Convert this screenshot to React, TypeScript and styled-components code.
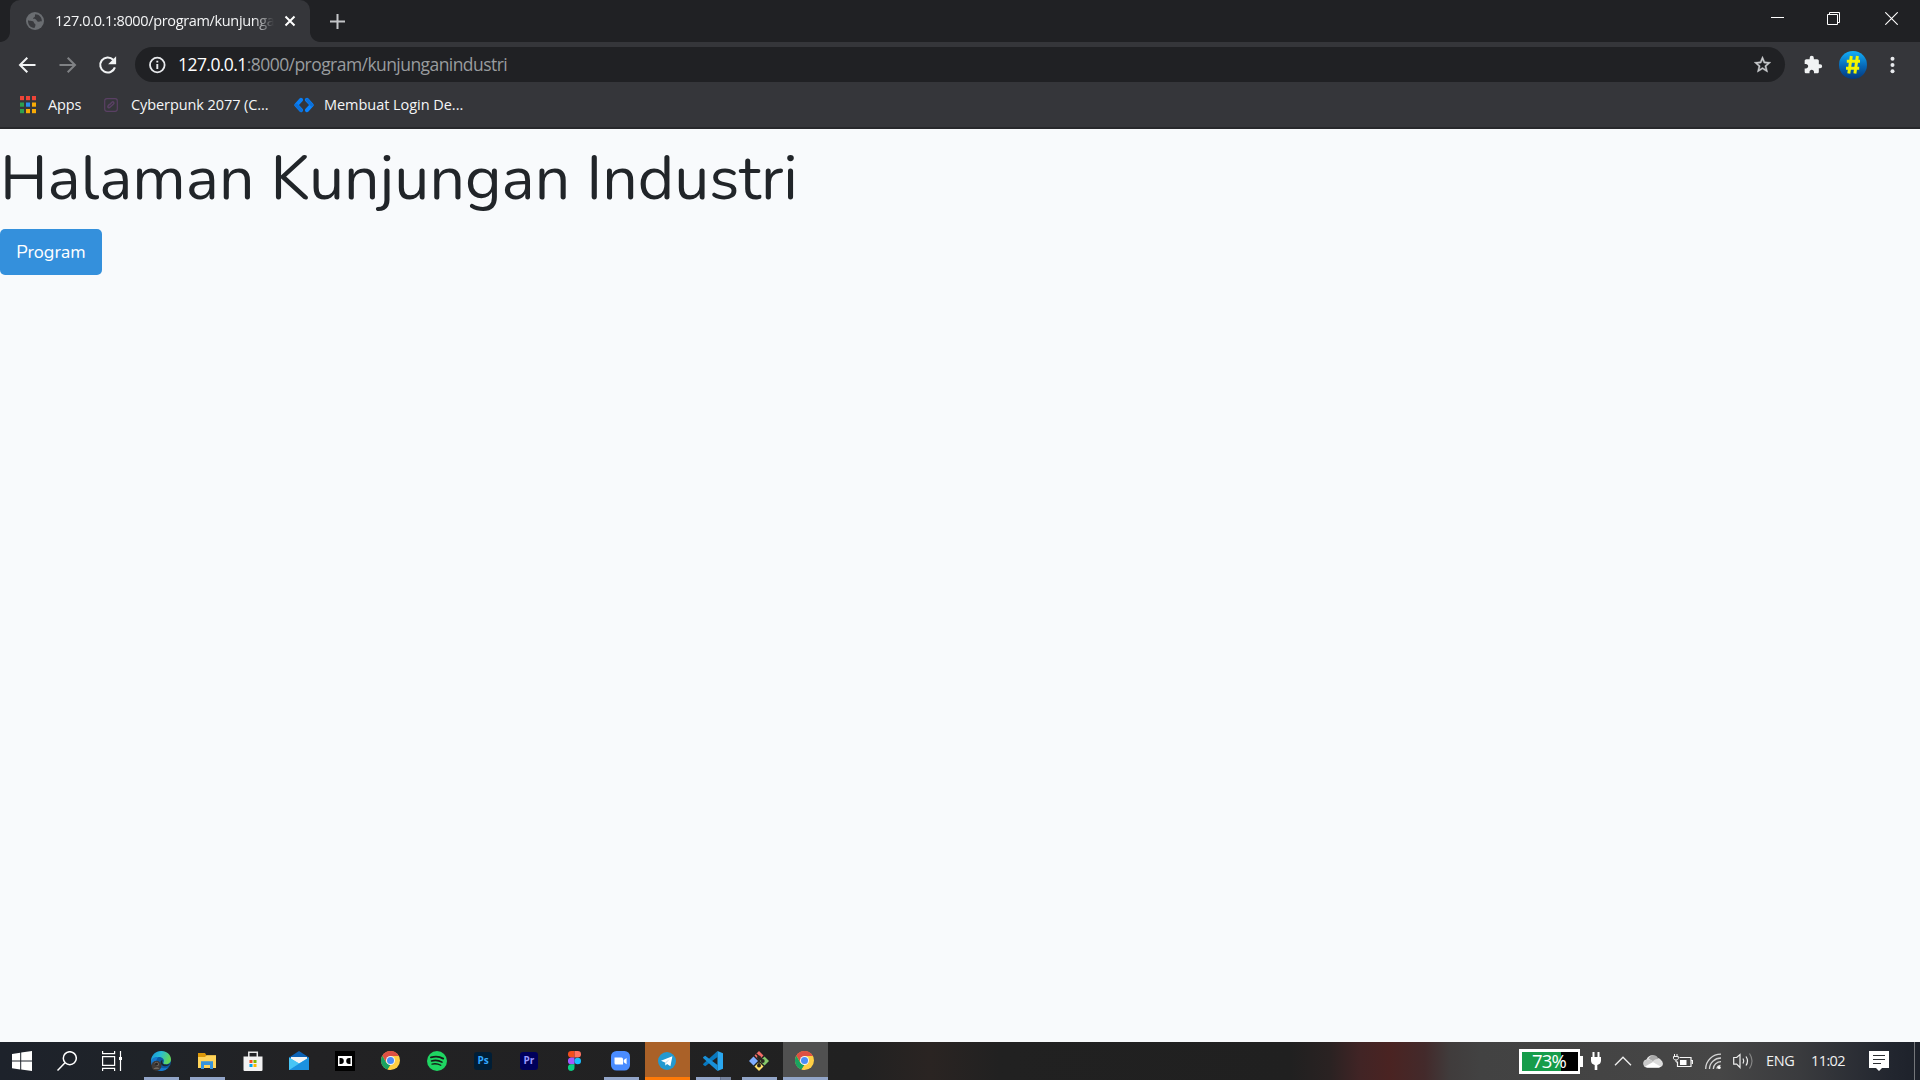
import React from "react";
import styled, { createGlobalStyle } from "styled-components";

const GlobalStyle = createGlobalStyle`
  * { box-sizing: border-box; }
  html, body { margin: 0; padding: 0; overflow: hidden; }
  body { font-family: "Open Sans", "Noto Sans", sans-serif; }
  svg { display: block; flex: none; }
`;

const Screen = styled.div`
  width: 1920px;
  height: 1080px;
  display: flex;
  flex-direction: column;
  background: #f8fafc;
  overflow: hidden;
`;

const Browser = styled.header`
  flex: none;
  height: 129px;
  display: flex;
  flex-direction: column;
  background: #35363a;
  border-bottom: 2px solid #27282b;
`;

const TabStrip = styled.div`
  height: 42px;
  display: flex;
  align-items: stretch;
  background: #202124;
`;

const Flare = styled.div<{ $side: "left" | "right" }>`
  width: 10px;
  background: radial-gradient(
    circle at ${(p) => (p.$side === "left" ? "0 32px" : "10px 32px")},
    #202124 9.5px,
    #35363a 10.3px
  );
  clip-path: inset(32px 0 0 0);
`;

const Tab = styled.div`
  width: 300px;
  display: flex;
  align-items: center;
  padding: 0 14px 0 16px;
  border-radius: 10px 10px 0 0;
  background: #35363a;
`;

const TabTitle = styled.div`
  width: 221px;
  margin: 0 9px 0 11px;
  padding-bottom: 1px;
  white-space: nowrap;
  color: #f4f5f6;
  font-size: 14.5px;
  line-height: 20px;
  letter-spacing: -0.35px;
  mask-image: linear-gradient(to right, #000 198px, transparent 219px);
`;

const NewTab = styled.div`
  display: flex;
  align-items: center;
  margin-left: 10px;
`;

const WindowButtons = styled.div`
  display: flex;
  margin-left: auto;
  height: 37px;
  align-items: center;
  gap: 43px;
  padding-right: 22px;
`;

const Toolbar = styled.div`
  height: 45px;
  display: flex;
  align-items: center;
  padding: 0 16px 0 18px;
`;

const NavButtons = styled.div`
  display: flex;
  gap: 20px;
  width: 117px;
`;

const AddressBar = styled.div`
  width: 1650px;
  height: 35px;
  display: flex;
  align-items: center;
  padding: 0 12px 0 12px;
  border-radius: 18px;
  background: #202124;
`;

const Url = styled.div`
  flex: 1;
  margin-left: 11px;
  padding-bottom: 1px;
  color: #999c9f;
  font-size: 17.5px;
  line-height: 24px;
  letter-spacing: -0.56px;
`;

const Host = styled.span`
  color: #fff;
`;

const Extensions = styled.div`
  display: flex;
  align-items: center;
  margin-left: 18px;
`;

const Profile = styled.div`
  margin: 0 15px 0 16px;
`;

const Bookmarks = styled.nav`
  height: 37px;
  display: flex;
  align-items: center;
  padding: 0 0 2px 18px;
`;

const Bookmark = styled.a<{ $width: number; $gap: number; $spacing: number }>`
  width: ${(p) => p.$width}px;
  display: flex;
  align-items: center;
  gap: ${(p) => p.$gap}px;
  color: #f4f5f6;
  font-size: 14.5px;
  line-height: 20px;
  letter-spacing: ${(p) => p.$spacing}px;
  white-space: nowrap;
`;

const Page = styled.main`
  flex: 1;
  color: #212529;
`;

const Heading = styled.h1`
  margin: 11px 0 12px;
  font-family: Nunito, Lato, sans-serif;
  font-size: 62.5px;
  font-weight: 400;
  line-height: 77px;
  white-space: nowrap;
`;

const ProgramButton = styled.button`
  display: block;
  width: 102px;
  height: 46px;
  border: 0;
  border-radius: 5px;
  padding: 0;
  background: #3490dc;
  color: #fff;
  font-family: Nunito, Lato, sans-serif;
  font-size: 18px;
`;

const Taskbar = styled.footer`
  flex: none;
  height: 38px;
  display: flex;
  background: linear-gradient(
    to right,
    #1d222b 0, #1f2328 150px, #222224 300px, #212121 860px,
    #2a2422 930px, #212121 1000px, #202020 1290px, #2a2222 1330px, #412425 1360px,
    #4a2322 1390px, #432a2b 1425px, #403c3c 1450px, #424242 1480px,
    #464646 1720px, #3a3b3e 1800px, #22262f 1890px, #1d212a 1920px
  );
`;

const SystemButtons = styled.div`
  display: flex;
  width: 139px;
`;

const Pinned = styled.div`
  display: flex;
  gap: 1px;
`;

const TaskCell = styled.div<{ $bg?: string; $line?: string }>`
  width: 45px;
  height: 38px;
  display: flex;
  align-items: center;
  justify-content: center;
  padding-right: 1px;
  background-color: ${(p) => p.$bg ?? "transparent"};
  background-image: ${(p) => (p.$line ? `linear-gradient(to right, ${p.$line})` : "none")};
  background-size: ${(p) => (p.$bg ? "45px 3px" : "35px 3px")};
  background-position: center bottom;
  background-repeat: no-repeat;
`;

const Adobe = styled.div<{ $bg: string; $fg: string }>`
  width: 18px;
  height: 18px;
  border-radius: 3px;
  background: ${(p) => p.$bg};
  color: ${(p) => p.$fg};
  font-size: 10px;
  font-weight: 700;
  line-height: 16px;
  text-align: center;
`;

const Tray = styled.div`
  display: flex;
  align-items: center;
  margin-left: auto;
`;

const Battery = styled.div`
  width: 61px;
  height: 25px;
  border: 3px solid #fff;
  border-right-width: 2px;
  padding-right: 2px;
  background: linear-gradient(to right, #169c4a 39px, #000 39px);
  color: #fff;
  font-size: 18.5px;
  line-height: 17px;
  letter-spacing: -0.8px;
  text-align: center;
`;

const BatteryTip = styled.div`
  width: 3px;
  height: 11px;
  background: #fff;
`;

const TrayCell = styled.div<{ $width: number }>`
  width: ${(p) => p.$width}px;
  display: flex;
  justify-content: center;
`;

const TrayText = styled.div<{ $width: number; $spacing: number }>`
  width: ${(p) => p.$width}px;
  color: #f0f0f0;
  font-size: 14.5px;
  line-height: 20px;
  letter-spacing: ${(p) => p.$spacing}px;
  white-space: nowrap;
`;

const DesktopPeek = styled.div`
  width: 6px;
  height: 38px;
  border-left: 1px solid #74767a;
`;

const Globe = () => (
  <svg width="18" height="18" viewBox="0 0 18 18">
    <circle cx="9" cy="9" r="9" fill="#6a6d71" />
    <path d="M2 8.2C3.6 9 5.4 8.6 7 9.3c1.2.6.5 2.1 1.9 2.5 1 .4.6 2.7-.5 4.1C4.6 15.800 1.700 12.700 2 8.200ZM9.300 2.200c-.8 1.100.2 1.800-.7 2.700-.9.8-1.900.9-1.600 1.700.5.900 1.700.1 3 .9 1 .7.8 2.200 2.300 2.300 1.400.1 1.900-.9 3.500-.4C16.300 5.600 13.200 2.200 9.300 2.200Z" fill="#393a3e" />
  </svg>
);

const CloseTab = () => (
  <svg width="12" height="12" viewBox="0 0 12 12">
    <path d="M1.500 1.500l9 9M10.500 1.500l-9 9" stroke="#fff" strokeWidth="2" />
  </svg>
);

const Plus = () => (
  <svg width="15" height="15" viewBox="0 0 15 15">
    <path d="M7.500 0v15M0 7.500h15" stroke="#c3c5c8" strokeWidth="2" />
  </svg>
);

const Minimise = () => (
  <svg width="13" height="13" viewBox="0 0 13 13"><path d="M0 5.500h13" stroke="#fff" /></svg>
);
const Restore = () => (
  <svg width="15" height="13" viewBox="0 0 15 13" fill="none" stroke="#fff">
    <path d="M.5 2.500h10v10H.5zM2.500 2.500v-2h10v10h-2" />
  </svg>
);
const CloseWindow = () => (
  <svg width="13" height="13" viewBox="0 0 13 13"><path d="M.3.300l12.400 12.400M12.700.300L.3 12.700" stroke="#fff" strokeWidth="1.100" /></svg>
);

const Arrow = ({ forward }: { forward?: boolean }) => (
  <svg width="20" height="20" viewBox="0 0 20 20" fill="none" stroke={forward ? "#808285" : "#f1f3f4"} strokeWidth="2">
    <path d={forward ? "M1.500 10h15M9.700 2.700L17 10l-7.300 7.300" : "M17.500 10H2.500M9.300 2.700L2 10l7.300 7.300"} />
  </svg>
);

const Reload = () => (
  <svg width="20" height="20" viewBox="0 0 20 20">
    <path d="M15.200 4.800A7.500 7.500 0 1 0 16.900 12.300" fill="none" stroke="#f1f3f4" strokeWidth="2.100" />
    <path d="M18.100 1.200v8h-8z" fill="#f1f3f4" />
  </svg>
);

const Info = () => (
  <svg width="20" height="20" viewBox="0 0 20 20">
    <circle cx="10.300" cy="10" r="7.300" fill="none" stroke="#e8eaed" strokeWidth="1.800" />
    <path d="M10.300 9v5M10.300 5.700v1.900" stroke="#e8eaed" strokeWidth="1.900" />
  </svg>
);

const Star = () => (
  <svg width="20" height="20" viewBox="0 0 24 24">
    <path transform="translate(-.6 -.4)" d="M22 9.240l-7.190-.62L12 2 9.190 8.630 2 9.240l5.460 4.730L5.820 21 12 17.270 18.180 21l-1.630-7.030L22 9.240zM12 15.400l-3.760 2.270 1-4.280-3.320-2.880 4.380-.38L12 6.100l1.710 4.040 4.380.38-3.320 2.880 1 4.280L12 15.400z" fill="#c8cacd" stroke="#c8cacd" strokeWidth=".5" />
  </svg>
);

const Puzzle = () => (
  <svg width="20" height="20" viewBox="0 0 24 24">
    <path d="M20.500 11H19V7c0-1.100-.9-2-2-2h-4V3.500a2.500 2.500 0 0 0-5 0V5H4c-1.100 0-1.990.9-1.990 2v3.800H3.500c1.490 0 2.700 1.210 2.700 2.700s-1.210 2.700-2.700 2.700H2V20c0 1.100.9 2 2 2h3.800v-1.500c0-1.490 1.210-2.700 2.700-2.700 1.490 0 2.700 1.210 2.700 2.700V22H17c1.100 0 2-.9 2-2v-4h1.500a2.500 2.500 0 0 0 0-5z" fill="#f1f3f4" />
  </svg>
);

const Avatar = () => (
  <svg width="28" height="28" viewBox="0 0 28 28">
    <defs>
      <linearGradient id="avatar" x1="0" y1="0" x2="0" y2="1">
        <stop offset="0" stopColor="#12b0fb" />
        <stop offset=".55" stopColor="#0766b4" />
        <stop offset="1" stopColor="#04397f" />
      </linearGradient>
    </defs>
    <circle cx="14" cy="14" r="14" fill="url(#avatar)" />
    <path d="M12.300 5L9.800 22.500M18.400 5l-2.500 17.500M7.800 10.300h13.200M7 17.300h13.200" stroke="#f3f500" strokeWidth="3" />
  </svg>
);

const Dots = () => (
  <svg width="20" height="20" viewBox="0 0 20 20" fill="#e8eaed">
    <circle cx="10.500" cy="3.700" r="2" /><circle cx="10.500" cy="10" r="2" /><circle cx="10.500" cy="16.300" r="2" />
  </svg>
);

const gridColors = ["#ee4437", "#ee4437", "#ee4437", "#2fa04e", "#2b8df0", "#f9ab05", "#2fa04e", "#f9ab05", "#f9ab05"];
const AppsGrid = () => (
  <svg width="20" height="18" viewBox="0 0 20 18">
    {gridColors.map((c, i) => (
      <rect key={i} x={2 + (i % 3) * 6} y={Math.floor(i / 3) * 6.5} width="4" height="4.200" fill={c} />
    ))}
  </svg>
);

const LinkBadge = () => (
  <svg width="14" height="14" viewBox="0 0 14 14" fill="none" stroke="#5a4064">
    <rect x=".7" y=".7" width="12.600" height="12.600" rx="2.200" strokeWidth="1.200" />
    <path d="M5.500 6.200l-1.300 1.500c-1.100 1.200.6 2.700 1.700 1.600L9.500 6c1.200-1.200-.3-2.900-1.600-1.800L5.500 6.800" strokeWidth="1.500" />
  </svg>
);

const CodeBrackets = () => (
  <svg width="20" height="16" viewBox="0 0 20 16" fill="none" strokeWidth="4" strokeLinecap="round" strokeLinejoin="round">
    <path d="M7 2.800L2.300 8 7 13.200" stroke="#0a7ff5" />
    <path d="M13 2.800L17.700 8 13 13.200" stroke="#0a84ff" />
    <path d="M2.300 8L7 13.200M13 2.800L17.700 8" stroke="#0b6fd8" strokeWidth="3" />
  </svg>
);

const Windows = () => (
  <svg width="20" height="20" viewBox="0 0 20 20" fill="#fff">
    <path d="M0 2.900L8.200 1.700v7.800H0zM9.200 1.500L20 0v9.500H9.200zM0 10.500h8.200v7.900L0 17.200zM9.200 10.500H20V20L9.200 18.500z" />
  </svg>
);
const Search = () => (
  <svg width="20" height="20" viewBox="0 0 20 20" fill="none" stroke="#fff" strokeWidth="1.500">
    <circle cx="12.800" cy="7.200" r="6.500" /><path d="M8 11.800L.5 19.500" />
  </svg>
);
const TaskView = () => (
  <svg width="20" height="20" viewBox="0 0 20 20" fill="none" stroke="#fff" strokeWidth="1.200">
    <path d="M.6 0v2.600h12V0M.6 5.600h12v8.800H.6zM.6 20v-2.600h12V20M18.500 0v20" />
    <path d="M17 6h3v3h-3z" fill="#fff" stroke="none" />
  </svg>
);
const Edge = () => (
  <svg width="20" height="20" viewBox="0 0 20 20">
    <defs>
      <linearGradient id="edge" x1="0" y1="0" x2="1" y2=".3">
        <stop offset="0" stopColor="#1590d8" /><stop offset=".5" stopColor="#28bdd4" /><stop offset="1" stopColor="#62d65b" />
      </linearGradient>
    </defs>
    <circle cx="10" cy="10" r="10" fill="#0c59a4" />
    <path d="M0 9.500C.6 3.800 5 0 10.300 0 16 0 20 4 20 8.300c0 3.400-2.500 5-5 5-2.200 0-3.100-1-2.500-1.900C14.100 8.700 11.500 6 8 6 4 6 1.400 8 0 11z" fill="url(#edge)" />
    <path d="M0 10c1-3 4-4.600 7.500-4C5 8 5 11 6 13c2 4 7 5 11.500 3.500A10 10 0 0 1 0 10z" fill="#1679ce" />
    <path d="M11.800 9c-.9 1.500-.8 4.300 2.500 4.600 2.200.2 3.800-.4 4.700-1.100-.7 2-3 3-5.500 2.700-3-.4-4.500-3-3.600-5.500z" fill="#1d252d" />
    <circle cx="5.500" cy="14.800" r="5" fill="#403a37" />
    <path d="M3.500 12.500c1-2 3.500-2 4.200.2.700 2-1 2.500-2.200 2.300zM2.500 18c1-2 5-2 6-.2" fill="#797068" />
    <circle cx="5.500" cy="13" r="1.500" fill="#252221" />
  </svg>
);
const Explorer = () => (
  <svg width="18" height="16" viewBox="0 0 18 16">
    <path d="M0 0h7l1.500 2.500H18V5H0z" fill="#dc9809" /><path d="M0 4h7l1.700-1.800H18V15H0z" fill="#ffd45a" />
    <path d="M3 8.300h12V16h-3v-4H6v4H3z" fill="#3593dd" />
  </svg>
);
const Store = () => (
  <svg width="20" height="20" viewBox="0 0 20 20">
    <path d="M5.800 6V1.200h8.500V6" fill="none" stroke="#e8e8e8" strokeWidth="1.500" /><path d="M.5 5.500h19V19q0 1-1 1h-17q-1 0-1-1z" fill="#f2f2f2" />
    <path d="M6.500 9h3v3h-3z" fill="#f25022" /><path d="M10.500 9h3v3h-3z" fill="#7fba00" />
    <path d="M6.500 13h3v3h-3z" fill="#00a4ef" /><path d="M10.500 13h3v3h-3z" fill="#ffb900" />
  </svg>
);
const Mail = () => (
  <svg width="20" height="20" viewBox="0 0 20 20">
    <path d="M0 6.500L10 0l10 6.500V12H0z" fill="#0b62b5" /><path d="M2 6h16v7H2z" fill="#f4f4f4" />
    <path d="M0 6.500l10 6 10-6V19H0z" fill="#32b2ef" /><path d="M0 19L20 6.500V19z" fill="#1b91df" />
    <path d="M0 6.500l10 6L0 19z" fill="#48c5f5" />
  </svg>
);
const Dolby = () => (
  <svg width="20" height="20" viewBox="0 0 20 20">
    <path d="M0 0h20v20H0z" fill="#000" /><path d="M3 5h14v10H3z" fill="#fff" />
    <path d="M5 7h.8a3 3 0 0 1 0 6H5zM15 7h-.8a3 3 0 0 0 0 6h.8z" fill="#000" />
    <path d="M5 7v6M15 7v6" stroke="#000" />
  </svg>
);
const Chrome = () => (
  <svg width="20" height="20" viewBox="0 0 20 20">
    <circle cx="9.500" cy="9.500" r="9.500" fill="#ffce44" />
    <path d="M1.300 4.700A9.500 9.500 0 0 1 17.800 5H9.500L5.400 11.500z" fill="#dd5044" />
    <path d="M1.300 4.700l4.200 7.200 4.100 2.200-3 4.500A9.500 9.500 0 0 1 1.300 4.700z" fill="#1aa260" />
    <path d="M13.500 11.700L9.300 19l-2.700-.4 3-4.500z" fill="#ffce44" />
    <circle cx="9.500" cy="9.500" r="4.500" fill="#f5f5f5" /><circle cx="9.500" cy="9.500" r="3.500" fill="#4a8cf7" />
  </svg>
);
const Spotify = () => (
  <svg width="20" height="20" viewBox="0 0 20 20" fill="none" stroke="#161b18" strokeLinecap="round">
    <circle cx="10" cy="10" r="10" fill="#1fd662" stroke="none" />
    <path d="M4 6.400c4.300-1.200 8.800-.8 12.200 1.200" strokeWidth="1.900" />
    <path d="M4.500 9.900c3.800-1 7.400-.6 10.500 1.200" strokeWidth="1.600" /><path d="M5 13.100c3.300-.7 6-.4 8.800 1.200" strokeWidth="1.300" />
  </svg>
);
const Figma = () => (
  <svg width="14" height="20" viewBox="0 0 14 20">
    <path d="M6.500 0H3.300a3.300 3.300 0 0 0 0 6.600h3.200z" fill="#f24e1e" /><path d="M6.500 0h3.200a3.300 3.300 0 0 1 0 6.600H6.500z" fill="#ff7262" />
    <path d="M6.500 6.600H3.300a3.300 3.300 0 0 0 0 6.700h3.200z" fill="#a259ff" /><circle cx="9.700" cy="10" r="3.300" fill="#1abcfe" />
    <path d="M3.300 13.300h3.200v3.300a3.300 3.300 0 1 1-3.200-3.300z" fill="#0acf83" />
  </svg>
);
const Zoom = () => (
  <svg width="20" height="20" viewBox="0 0 20 20">
    <rect width="19" height="19.500" rx="5.500" fill="#4a8cff" />
    <path d="M3.500 6.500h7q1.500 0 1.500 1.500v5.500H5q-1.500 0-1.500-1.500zM12.700 9l2.900-2v6.200l-2.900-2z" fill="#fff" />
  </svg>
);
const Telegram = () => (
  <svg width="18" height="18" viewBox="0 0 18 18">
    <circle cx="9" cy="9" r="9" fill="#2399d0" />
    <path d="M3 8.700l11.400-4.500-2 10.100-3.300-2.400-1.700 1.600-.4-3z" fill="#fff" /><path d="M7 10.500l5.500-4.300-4.500 5-.6 2.300z" fill="#c7dce9" />
  </svg>
);
const VSCode = () => (
  <svg width="20" height="20" viewBox="0 0 20 20">
    <path d="M14.500 0v6L2.200 15.200.3 13.900q-.5-.6 0-1.200z" fill="#0878bf" />
    <path d="M.3 6.100l1.900-1.300L14.500 14v6L.3 7.300q-.5-.6 0-1.200z" fill="#1890d8" />
    <path d="M14.500 0L20 2.300v15.400L14.500 20z" fill="#2aa7ef" />
  </svg>
);
const Git = () => (
  <svg width="20" height="20" viewBox="0 0 20 20">
    <path d="M10 0l4.500 4.500L10 9 5.500 4.500z" fill="#f36c68" /><path d="M15.500 5.500L20 10l-4.500 4.500L11 10z" fill="#86c96a" />
    <path d="M10 11l4.500 4.500L10 20l-4.500-4.500z" fill="#ffdf6b" /><path d="M4.500 5.500L9 10l-4.500 4.500L0 10z" fill="#80adff" />
    <path d="M7.300 2.800l2.700 3v9.500M10 6.500l4 3.500" fill="none" stroke="#292622" strokeWidth="1.500" />
    <circle cx="10" cy="6.500" r="2" fill="#292622" /><circle cx="13.800" cy="10" r="1.900" fill="#292622" /><circle cx="10" cy="14.500" r="2" fill="#292622" />
  </svg>
);

const Plug = () => (
  <svg width="12" height="19" viewBox="0 0 12 19" fill="#fff">
    <path d="M2.500 0h2v5h3V0h2v5H11v3.500q0 3.500-3.700 4.500v5H4.700v-5Q1 12 1 8.500V5h1.500z" />
  </svg>
);
const ChevronUp = () => (
  <svg width="18" height="10" viewBox="0 0 18 10"><path d="M1 9.200l8-8 8 8" fill="none" stroke="#f0f0f0" strokeWidth="1.300" /></svg>
);
const Cloud = () => (
  <svg width="20" height="14" viewBox="0 0 20 14">
    <path d="M4.300 13.500A4 4 0 0 1 3.500 5.600C5 1.200 10.800-.8 14.200 4A5 5 0 0 1 16 13.500z" fill="#e7e7e7" />
    <path d="M5.500 4.500C8.500-.5 14.500.500 15.300 5L10 7.300z" fill="#a9a9a9" />
    <path d="M3.500 5.700q3-1 6.500 1.600l8 5q-1 1-2.500 1.200H4.300A4 4 0 0 1 3.500 5.700z" fill="#c9c9c9" />
    <path d="M9.500 7.500Q13 4 17 5.500q4 2.200 2.500 5.700L18 13z" fill="#dcdcdc" /><path d="M2 12.500L10 8l8 4.800q-1 .7-2 .7H4.300z" fill="#fff" />
  </svg>
);
const Charging = () => (
  <svg width="20" height="14" viewBox="0 0 20 14" fill="none" stroke="#f5f5f5">
    <path d="M6.500 3.500h11.500v9H4.500V8M18.500 6.500h1v3.500" strokeWidth="1.200" /><path d="M7 6h6.500v5H7z" fill="#fff" stroke="none" />
    <path d="M1.500 0v2M4 0v2M.5 2.500h4.800v2.200q-.5 1.300-2.300 1.300-2 0-2.500-1.300zM3 6v2h2" />
  </svg>
);
const Wifi = () => (
  <svg width="16" height="17" viewBox="0 0 16 17" fill="none" stroke="#d5d5d5" strokeWidth="1.300">
    <path d="M.7 16C.7 7.500 7.500 1.200 16 1.200M4.500 16C4.500 9.800 9.800 5 16 5M8.300 16c0-4 3.700-7.300 7.700-7.300" />
    <path d="M12 15.800q0-3.200 3.500-3.500" /><circle cx="14.200" cy="14.500" r="1.500" fill="#fff" stroke="none" />
  </svg>
);
const Speaker = () => (
  <svg width="21" height="18" viewBox="0 0 21 18" fill="none" stroke="#eee" strokeWidth="1.200">
    <path d="M.7 5.500h3L7 2.500v13l-3.300-3.300h-3zM10 6.500q1.500 2.500 0 5M13 4.500q3 4.500 0 9" /><path d="M16.500 1.500q5 7.500 0 15" stroke="#858585" />
  </svg>
);
const Notification = () => (
  <svg width="20" height="20" viewBox="0 0 20 20">
    <path d="M0 0h20v17h-7l-3 3-3-3H0z" fill="#fff" /><path d="M4 4.500h12M4 8.500h12M4 12.500h8" stroke="#2c2e33" strokeWidth="1.200" />
  </svg>
);

const RUN = "#92a5c8, #92a5c8";

const pinned: { icon: React.ReactNode; bg?: string; line?: string }[] = [
  { icon: <Edge />, line: RUN },
  { icon: <Explorer />, line: RUN },
  { icon: <Store /> },
  { icon: <Mail /> },
  { icon: <Dolby /> },
  { icon: <Chrome /> },
  { icon: <Spotify /> },
  { icon: <Adobe $bg="#001e36" $fg="#31a8ff">Ps</Adobe> },
  { icon: <Adobe $bg="#00005b" $fg="#9999ff">Pr</Adobe> },
  { icon: <Figma /> },
  { icon: <Zoom />, line: RUN },
  { icon: <Telegram />, bg: "#aa6128", line: "#ff7a08, #ff7a08" },
  { icon: <VSCode />, line: "#92a5c8 24px, #64708a 24px, #64708a 25px, #75829c 25px" },
  { icon: <Git />, line: RUN },
  { icon: <Chrome />, bg: "#505050", line: RUN },
];

export default function App() {
  return (
    <Screen>
      <GlobalStyle />
      <Browser>
        <TabStrip>
          <Flare $side="left" />
          <Tab>
            <Globe />
            <TabTitle>127.0.0.1:8000/program/kunjunga</TabTitle>
            <CloseTab />
          </Tab>
          <Flare $side="right" />
          <NewTab><Plus /></NewTab>
          <WindowButtons><Minimise /><Restore /><CloseWindow /></WindowButtons>
        </TabStrip>
        <Toolbar>
          <NavButtons><Arrow /><Arrow forward /><Reload /></NavButtons>
          <AddressBar>
            <Info />
            <Url><Host>127.0.0.1</Host>:8000/program/kunjunganindustri</Url>
            <Star />
          </AddressBar>
          <Extensions>
            <Puzzle />
            <Profile><Avatar /></Profile>
            <Dots />
          </Extensions>
        </Toolbar>
        <Bookmarks>
          <Bookmark $width={86} $gap={10} $spacing={-0.1}><AppsGrid />Apps</Bookmark>
          <Bookmark $width={190} $gap={13} $spacing={-0.08}><LinkBadge />Cyberpunk 2077 (C...</Bookmark>
          <Bookmark $width={180} $gap={10} $spacing={-0.04}><CodeBrackets />Membuat Login De...</Bookmark>
        </Bookmarks>
      </Browser>
      <Page>
        <Heading>Halaman Kunjungan Industri</Heading>
        <ProgramButton>Program</ProgramButton>
      </Page>
      <Taskbar>
        <SystemButtons>
          <TaskCell><Windows /></TaskCell>
          <TaskCell><Search /></TaskCell>
          <TaskCell><TaskView /></TaskCell>
        </SystemButtons>
        <Pinned>
          {pinned.map((p, i) => (
            <TaskCell key={i} $bg={p.bg} $line={p.line}>{p.icon}</TaskCell>
          ))}
        </Pinned>
        <Tray>
          <Battery>73%</Battery>
          <BatteryTip />
          <TrayCell $width={26}><Plug /></TrayCell>
          <TrayCell $width={28}><ChevronUp /></TrayCell>
          <TrayCell $width={31}><Cloud /></TrayCell>
          <TrayCell $width={30}><Charging /></TrayCell>
          <TrayCell $width={30}><Wifi /></TrayCell>
          <TrayCell $width={30}><Speaker /></TrayCell>
          <TrayCell $width={8} />
          <TrayText $width={45} $spacing={-0.3}>ENG</TrayText>
          <TrayText $width={58} $spacing={-0.6}>11:02</TrayText>
          <TrayCell $width={20}><Notification /></TrayCell>
          <TrayCell $width={25} />
          <DesktopPeek />
        </Tray>
      </Taskbar>
    </Screen>
  );
}
